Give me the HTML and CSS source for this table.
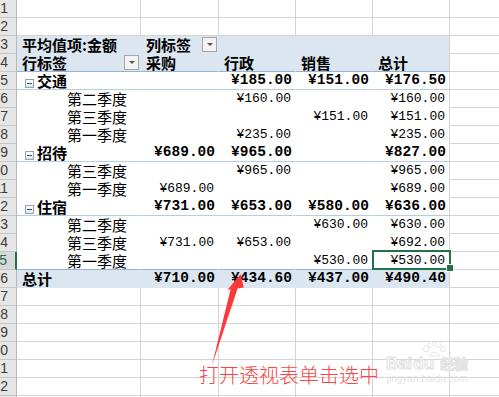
FILE: index.html
```html
<!DOCTYPE html>
<html lang="zh">
<head>
<meta charset="utf-8">
<title>数据透视表</title>
<link rel="stylesheet" href="styles.css">
</head>
<body>
<div class="sheet">
  <div class="row"><div class="hd">1</div><div class="c"></div><div class="c"></div><div class="c"></div><div class="c"></div><div class="c"></div><div class="c"></div></div>
  <div class="row"><div class="hd">2</div><div class="c"></div><div class="c"></div><div class="c"></div><div class="c"></div><div class="c"></div><div class="c"></div></div>

  <div class="row head"><div class="hd">3</div>
    <div class="p t b">平均值项:金额</div>
    <div class="p t b split">列标签<span class="dd"></span></div>
    <div class="p"></div><div class="p"></div><div class="p pe"></div><div class="c"></div></div>
  <div class="row head line"><div class="hd">4</div>
    <div class="p t b split">行标签<span class="dd"></span></div>
    <div class="p t b">采购</div><div class="p t b">行政</div><div class="p t b">销售</div><div class="p pe t b">总计</div><div class="c"></div></div>

  <div class="row cat"><div class="hd">5</div>
    <div class="p t b"><span class="tog"></span>交通</div>
    <div class="p n b"></div><div class="p n b">¥185.00</div><div class="p n b">¥151.00</div><div class="p pe n b">¥176.50</div><div class="c"></div></div>
  <div class="row"><div class="hd">6</div>
    <div class="p t sub">第二季度</div>
    <div class="p n"></div><div class="p n">¥160.00</div><div class="p n"></div><div class="p pe n">¥160.00</div><div class="c"></div></div>
  <div class="row"><div class="hd">7</div>
    <div class="p t sub">第三季度</div>
    <div class="p n"></div><div class="p n"></div><div class="p n">¥151.00</div><div class="p pe n">¥151.00</div><div class="c"></div></div>
  <div class="row"><div class="hd">8</div>
    <div class="p t sub">第一季度</div>
    <div class="p n"></div><div class="p n">¥235.00</div><div class="p n"></div><div class="p pe n">¥235.00</div><div class="c"></div></div>

  <div class="row cat"><div class="hd">9</div>
    <div class="p t b"><span class="tog"></span>招待</div>
    <div class="p n b">¥689.00</div><div class="p n b">¥965.00</div><div class="p n b"></div><div class="p pe n b">¥827.00</div><div class="c"></div></div>
  <div class="row"><div class="hd">10</div>
    <div class="p t sub">第三季度</div>
    <div class="p n"></div><div class="p n">¥965.00</div><div class="p n"></div><div class="p pe n">¥965.00</div><div class="c"></div></div>
  <div class="row"><div class="hd">11</div>
    <div class="p t sub">第一季度</div>
    <div class="p n">¥689.00</div><div class="p n"></div><div class="p n"></div><div class="p pe n">¥689.00</div><div class="c"></div></div>

  <div class="row cat"><div class="hd">12</div>
    <div class="p t b"><span class="tog"></span>住宿</div>
    <div class="p n b">¥731.00</div><div class="p n b">¥653.00</div><div class="p n b">¥580.00</div><div class="p pe n b">¥636.00</div><div class="c"></div></div>
  <div class="row"><div class="hd">13</div>
    <div class="p t sub">第二季度</div>
    <div class="p n"></div><div class="p n"></div><div class="p n">¥630.00</div><div class="p pe n">¥630.00</div><div class="c"></div></div>
  <div class="row"><div class="hd">14</div>
    <div class="p t sub">第三季度</div>
    <div class="p n">¥731.00</div><div class="p n">¥653.00</div><div class="p n"></div><div class="p pe n">¥692.00</div><div class="c"></div></div>
  <div class="row line"><div class="hd cur">15</div>
    <div class="p t sub">第一季度</div>
    <div class="p n"></div><div class="p n"></div><div class="p n">¥530.00</div><div class="p pe n sel">¥530.00</div><div class="c"></div></div>

  <div class="row head tot"><div class="hd">16</div>
    <div class="p t b">总计</div>
    <div class="p n b">¥710.00</div><div class="p n b">¥434.60</div><div class="p n b">¥437.00</div><div class="p pe n b">¥490.40</div><div class="c"></div></div>

  <div class="row"><div class="hd">17</div><div class="c"></div><div class="c"></div><div class="c"></div><div class="c"></div><div class="c"></div><div class="c"></div></div>
  <div class="row"><div class="hd">18</div><div class="c"></div><div class="c"></div><div class="c"></div><div class="c"></div><div class="c"></div><div class="c"></div></div>
  <div class="row"><div class="hd">19</div><div class="c"></div><div class="c"></div><div class="c"></div><div class="c"></div><div class="c"></div><div class="c"></div></div>
  <div class="row"><div class="hd">20</div><div class="c"></div><div class="c"></div><div class="c"></div><div class="c"></div><div class="c"></div><div class="c"></div></div>
  <div class="row"><div class="hd">21</div><div class="c"></div><div class="c"></div><div class="c"></div><div class="c"></div><div class="c"></div><div class="c"></div></div>
  <div class="row"><div class="hd">22</div><div class="c"></div><div class="c"></div><div class="c"></div><div class="c"></div><div class="c"></div><div class="c"></div></div>
  <div class="row"><div class="hd">23</div><div class="c"></div><div class="c"></div><div class="c"></div><div class="c"></div><div class="c"></div><div class="c"></div></div>
</div>

<svg class="arrow" width="499" height="397" viewBox="0 0 499 397">
  <polygon points="240.7,274 243.8,287.5 237.6,288.6 211.8,366 230.6,289.2 227.4,290" fill="#fa3a3a"/>
</svg>
<div class="note">打开透视表单击选中</div>

<div class="mark">
  <svg class="paw" width="30" height="16" viewBox="0 0 30 16">
    <g fill="none" stroke="#e4e4e4" stroke-width="1">
      <ellipse cx="6" cy="8" rx="2.5" ry="3"/>
      <ellipse cx="11" cy="3.5" rx="2.5" ry="3"/>
      <ellipse cx="18" cy="3.5" rx="2.5" ry="3"/>
      <ellipse cx="23" cy="8" rx="2.5" ry="3"/>
      <path d="M9 15 Q14.5 7 20 15 Z"/>
    </g>
  </svg>
  <div class="mark-t"><span class="bai">Bai</span><span class="du">du</span><span class="jy">经验</span></div>
  <div class="mark-u">jingyan.baidu.com</div>
</div>
</body>
</html>
```

FILE: styles.css
```css
html, body {
  margin: 0;
  padding: 0;
  background: #ffffff;
  overflow: hidden;
}
body {
  width: 499px;
  height: 397px;
  position: relative;
}
.sheet {
  margin-left: -9px;
  width: 540px;
}
.row {
  display: grid;
  grid-template-columns: 26px 124px 78px 77px 77px 77px 1fr;
  height: 18px;
}
.row > div {
  box-sizing: border-box;
  height: 18px;
  line-height: 17px;
  white-space: nowrap;
}
.hd {
  background: #e6e6e6;
  border-right: 1px solid #b8b8b8;
  border-bottom: 1px solid #c6c6c6;
  font-family: "Liberation Sans", Arial, sans-serif;
  font-size: 14px;
  color: #3c3c3c;
  text-align: right;
  padding-right: 8px;
}
.hd.cur {
  background: #d8d8d8;
  border-right: 2px solid #217346;
  color: #217346;
}
.c {
  border-right: 1px solid #d4d4d4;
  border-bottom: 1px solid #d4d4d4;
}
.p {
  border-right: 1px solid transparent;
  border-bottom: 1px solid transparent;
  color: #000;
}
.p.pe {
  border-right-color: #d4d4d4;
}
.head .p {
  background: #dce6f1;
}
.line .p {
  border-bottom-color: #95b3d7;
}
.cat .p {
  border-bottom-color: #b8cce4;
}
.t {
  font-family: "Noto Sans CJK SC", sans-serif;
  font-size: 15px;
  padding-left: 5px;
}
.t.b {
  font-weight: 700;
}
.t.sub {
  padding-left: 50px;
}
.split {
  display: flex;
  justify-content: space-between;
  align-items: flex-start;
  padding-right: 1px;
}
.dd {
  width: 15px;
  height: 15px;
  box-sizing: border-box;
  border: 1px solid #a6a6a6;
  background: #f4f4f4;
  margin-top: 1px;
  display: flex;
  align-items: center;
  justify-content: center;
}
.dd::after {
  content: "";
  border-left: 3px solid transparent;
  border-right: 3px solid transparent;
  border-top: 3px solid #555;
}
.tog {
  display: inline-block;
  width: 9px;
  height: 9px;
  box-sizing: border-box;
  border: 1px solid #8ea2bd;
  background: linear-gradient(#ffffff, #dfe6ee);
  margin-left: 3px;
  margin-right: 3px;
  position: relative;
  vertical-align: -1px;
}
.tog::after {
  content: "";
  position: absolute;
  left: 1px;
  right: 1px;
  top: 3px;
  height: 1px;
  background: #3a4a62;
}
.n {
  font-family: "Liberation Mono", "DejaVu Sans Mono", monospace;
  font-size: 13px;
  text-align: right;
  padding-right: 4px;
}
.n.b {
  font-weight: 700;
  font-size: 14.5px;
  padding-right: 3px;
}
.sel {
  position: relative;
}
.sel::before {
  content: "";
  position: absolute;
  left: -1px;
  top: -2px;
  width: 79px;
  height: 20px;
  box-sizing: border-box;
  border: 2px solid #217346;
}
.sel::after {
  content: "";
  position: absolute;
  left: 74px;
  top: 13px;
  width: 6px;
  height: 6px;
  box-sizing: border-box;
  background: #217346;
  outline: 1px solid #ffffff;
}
.arrow {
  position: absolute;
  left: 0;
  top: 0;
  pointer-events: none;
}
.note {
  position: absolute;
  left: 199px;
  top: 365px;
  font-family: "Noto Sans CJK SC", sans-serif;
  font-weight: 300;
  font-size: 20px;
  line-height: 20px;
  color: #fa4444;
  white-space: nowrap;
}
.mark {
  position: absolute;
  left: 381px;
  top: 341px;
  width: 92px;
  display: flex;
  flex-direction: column;
  align-items: center;
  pointer-events: none;
}
.paw {
  margin-left: 16px;
}
.mark-t {
  display: flex;
  align-items: baseline;
  font-family: "Liberation Sans", Arial, sans-serif;
  font-weight: 700;
  font-size: 17px;
  line-height: 17px;
  color: #ffffff;
  -webkit-text-stroke: 1px #e0e0e0;
  margin-top: -2px;
}
.du {
  margin-left: 1px;
}
.jy {
  font-family: "Noto Sans CJK SC", sans-serif;
  font-size: 14px;
  margin-left: 6px;
}
.mark-u {
  font-family: "Liberation Sans", Arial, sans-serif;
  font-size: 10px;
  line-height: 11px;
  color: #e4e4e4;
  margin-top: 1px;
}
```
